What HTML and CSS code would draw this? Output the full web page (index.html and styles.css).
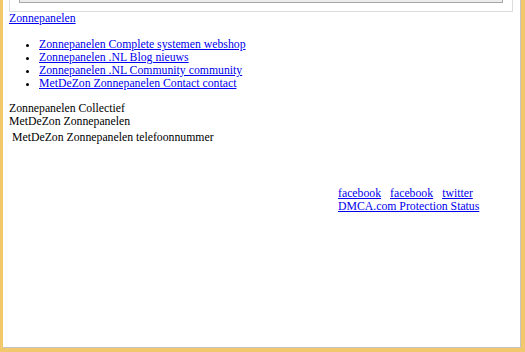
FILE: index.html
```html
<!DOCTYPE html>
<html lang="nl">
<head>
    <meta charset="UTF-8" />
    <title>Zonnepanelen</title>
    <link rel="stylesheet" href="styles.css">
</head>
<body>

<div class="window">
    <div class="top-box">
        <div class="search"></div>
    </div>

    <a class="home" href="#">Zonnepanelen</a>

    <ul class="menu">
        <li><a href="#">Zonnepanelen Complete systemen webshop</a></li>
        <li><a href="#">Zonnepanelen .NL Blog nieuws</a></li>
        <li><a href="#">Zonnepanelen .NL Community community</a></li>
        <li><a href="#">MetDeZon Zonnepanelen Contact contact</a></li>
    </ul>

    <p class="info">Zonnepanelen Collectief<br>MetDeZon Zonnepanelen</p>
    <p class="phone">MetDeZon Zonnepanelen telefoonnummer</p>

    <div class="social">
        <div class="social-links">
            <a href="#">facebook</a>
            <a href="#">facebook</a>
            <a href="#">twitter</a>
        </div>
        <a href="#">DMCA.com Protection Status</a>
    </div>
</div>

</body>
</html>
```

FILE: styles.css
```css
body {
    margin: 0;
    background: #f1c86c;
    font-family: "Liberation Serif", "Times New Roman", serif;
    font-size: 11.75px;
    line-height: 13px;
    color: #000;
    overflow: hidden;
}

a {
    color: #0000ee;
}

.window {
    margin: 0 4px 3px 3px;
    height: 348px;
    box-sizing: border-box;
    padding: 0 6px;
    background: #fff;
    border-right: 1px solid #c4c4c4;
    border-bottom: 1px solid #c4c4c4;
}

.top-box {
    height: 11px;
    margin-right: 1px;
    padding: 0 9px;
    border: 1px solid #dcdcdc;
    border-top: none;
}

.search {
    height: 2px;
    background: #ececec;
    border: 1px solid #a8a8a8;
    border-top: none;
}

.home {
    display: block;
    width: max-content;
}

.menu {
    margin: 13px 0 12px;
    padding-left: 30px;
}

.info {
    margin: 0;
}

.phone {
    margin: 3px 0 0;
    padding-left: 3px;
}

.social {
    margin: 43px 0 0 329px;
}

.social-links {
    display: flex;
    gap: 9px;
}
```
